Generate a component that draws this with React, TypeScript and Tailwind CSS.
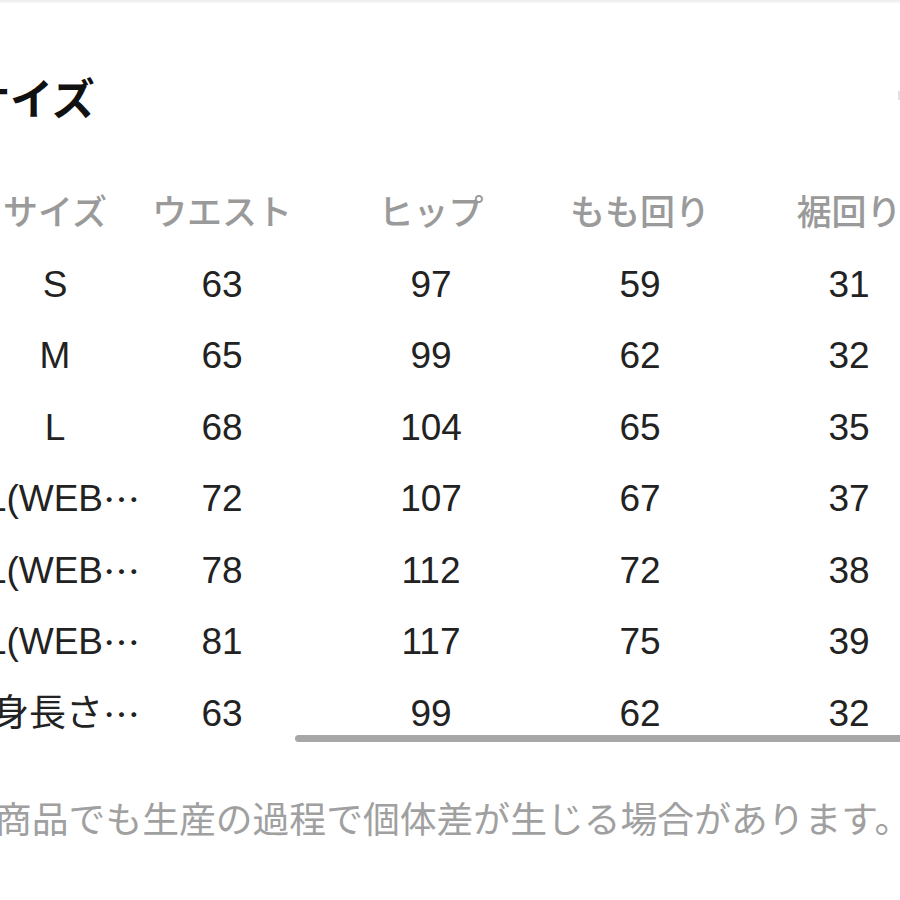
const font = "font-['Liberation_Sans','Noto_Sans_CJK_JP',sans-serif]"

const headers = ["サイズ", "ウエスト", "ヒップ", "もも回り", "裾回り"]

const rows: [string, boolean, number, number, number, number][] = [
  ["S", false, 63, 97, 59, 31],
  ["M", false, 65, 99, 62, 32],
  ["L", false, 68, 104, 65, 35],
  ["XL(WEB", true, 72, 107, 67, 37],
  ["2XL(WEB", true, 78, 112, 72, 38],
  ["3XL(WEB", true, 81, 117, 75, 39],
  ["低身長さ", true, 63, 99, 62, 32],
]

function SizeCell({ label, cut }: { label: string; cut: boolean }) {
  return (
    <div className={`w-[170px] justify-self-center whitespace-nowrap ${cut ? "flex justify-end" : "text-center"}`}>
      {label}
      {cut && <span className="font-['Noto_Sans_CJK_JP',sans-serif]">…</span>}
    </div>
  )
}

export default function App() {
  return (
    <div className={`relative w-[900px] h-[900px] overflow-hidden bg-white ${font}`}>
      <div className="h-[3px] bg-gradient-to-b from-[#ececec] to-[#f8f8f8]" />

      {/* title, left part cut off by the crop */}
      <div className="mt-[73px] -ml-[33px] h-[48px] leading-[48px] text-[43px] font-bold text-[#111] whitespace-nowrap">
        サイズ
      </div>
      <div className="absolute right-0 top-[91px] w-[2px] h-[9px] bg-[#e2e2e2]" />

      <div className="mt-[53px] -ml-[7.5px] grid grid-cols-[125px_209px_209px_209px_209px] auto-rows-[71.5px] items-center text-[37px] leading-none text-[#222]">
        {headers.map((h, i) => (
          <div
            key={h}
            className={`h-[73px] flex items-center whitespace-nowrap text-[35px] font-medium text-[#9a9a9a] ${
              i === 0 ? "w-[170px] justify-self-center justify-center" : "justify-center"
            }`}
          >
            {h}
          </div>
        ))}
        {rows.map(([label, cut, w, h, t, s]) => (
          <div key={label} className="contents">
            <SizeCell label={label} cut={cut} />
            <div className="text-center">{w}</div>
            <div className="text-center">{h}</div>
            <div className="text-center">{t}</div>
            <div className="text-center">{s}</div>
          </div>
        ))}
      </div>

      {/* horizontal scroll indicator */}
      <div className="absolute top-[735px] left-[295px] right-0 h-[7px] rounded-l-full bg-[#a7a7a7]" />

      <div className="mt-[50px] -ml-[5px] h-[44px] leading-[44px] text-[36.8px] text-[#a0a0a0] whitespace-nowrap">
        商品でも生産の過程で個体差が生じる場合があります。
      </div>
    </div>
  )
}
